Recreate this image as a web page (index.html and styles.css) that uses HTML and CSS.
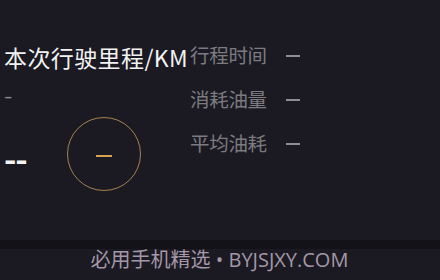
FILE: index.html
```html
<!DOCTYPE html>
<html lang="zh">
<head>
<meta charset="utf-8">
<link rel="stylesheet" href="styles.css">
</head>
<body>
<div class="screen">
  <div class="main">
    <div class="left">
      <div class="title">本次行驶里程/KM</div>
      <div class="sub">-</div>
      <div class="gauge-row">
        <div class="value">--</div>
        <div class="ring"><span class="ring-dash"></span></div>
      </div>
    </div>
    <div class="stats">
      <div class="stat"><span class="label">行程时间</span><span class="dash"></span></div>
      <div class="stat"><span class="label">消耗油量</span><span class="dash"></span></div>
      <div class="stat"><span class="label">平均油耗</span><span class="dash"></span></div>
    </div>
  </div>
  <div class="footer">
    <div class="band"></div>
    <div class="credit">必用手机精选 • BYJSJXY.COM</div>
  </div>
</div>
</body>
</html>
```
FILE: styles.css
```css
html, body {
  margin: 0;
  padding: 0;
  background: #1b1a22;
}
body {
  width: 440px;
  height: 280px;
  overflow: hidden;
  font-family: "Noto Sans CJK SC", "Noto Sans", sans-serif;
}
.screen {
  display: flex;
  flex-direction: column;
  height: 280px;
}
.main {
  display: flex;
  flex: 1;
  padding-top: 43px;
}
.left {
  width: 186px;
  padding-left: 4px;
  display: flex;
  flex-direction: column;
}
.title {
  color: #f2f2f2;
  font-size: 23px;
  line-height: 28px;
  letter-spacing: 0.4px;
  white-space: nowrap;
}
.sub {
  margin-top: 17px;
  color: #8a8a90;
  font-family: "DejaVu Sans", sans-serif;
  font-size: 18px;
  line-height: 16px;
  height: 16px;
  transform: scaleX(1.3);
  transform-origin: left center;
}
.gauge-row {
  display: flex;
  align-items: center;
  margin-top: 13px;
}
.value {
  width: 63px;
  color: #f4f4f4;
  font-family: "DejaVu Sans", sans-serif;
  font-weight: bold;
  font-size: 24px;
  line-height: 24px;
  letter-spacing: -1px;
  transform: scaleX(1.25);
  transform-origin: left center;
  margin-top: 14px;
}
.ring {
  width: 72px;
  height: 72px;
  border: 1.5px solid #a5824e;
  border-radius: 50%;
  display: flex;
  align-items: center;
  justify-content: center;
}
.ring-dash {
  width: 16px;
  height: 2px;
  background: #d9a24f;
  margin-top: 3px;
}
.stats {
  display: flex;
  flex-direction: column;
  gap: 18px;
  margin-top: -1px;
}
.stat {
  display: flex;
  align-items: center;
  height: 26px;
}
.label {
  color: #7c7b80;
  font-size: 19.5px;
  line-height: 26px;
  width: 96px;
  letter-spacing: -0.3px;
}
.dash {
  width: 14px;
  height: 2px;
  background: #8e8d92;
  margin-top: 2px;
}
.footer {
  height: 40px;
  display: flex;
  flex-direction: column;
}
.band {
  height: 9px;
  background: #131218;
}
.credit {
  text-align: center;
  color: #a497a8;
  font-family: "Open Sans", "Noto Sans CJK SC", sans-serif;
  font-size: 20px;
  line-height: 22px;
  margin-left: -1px;
}
```
